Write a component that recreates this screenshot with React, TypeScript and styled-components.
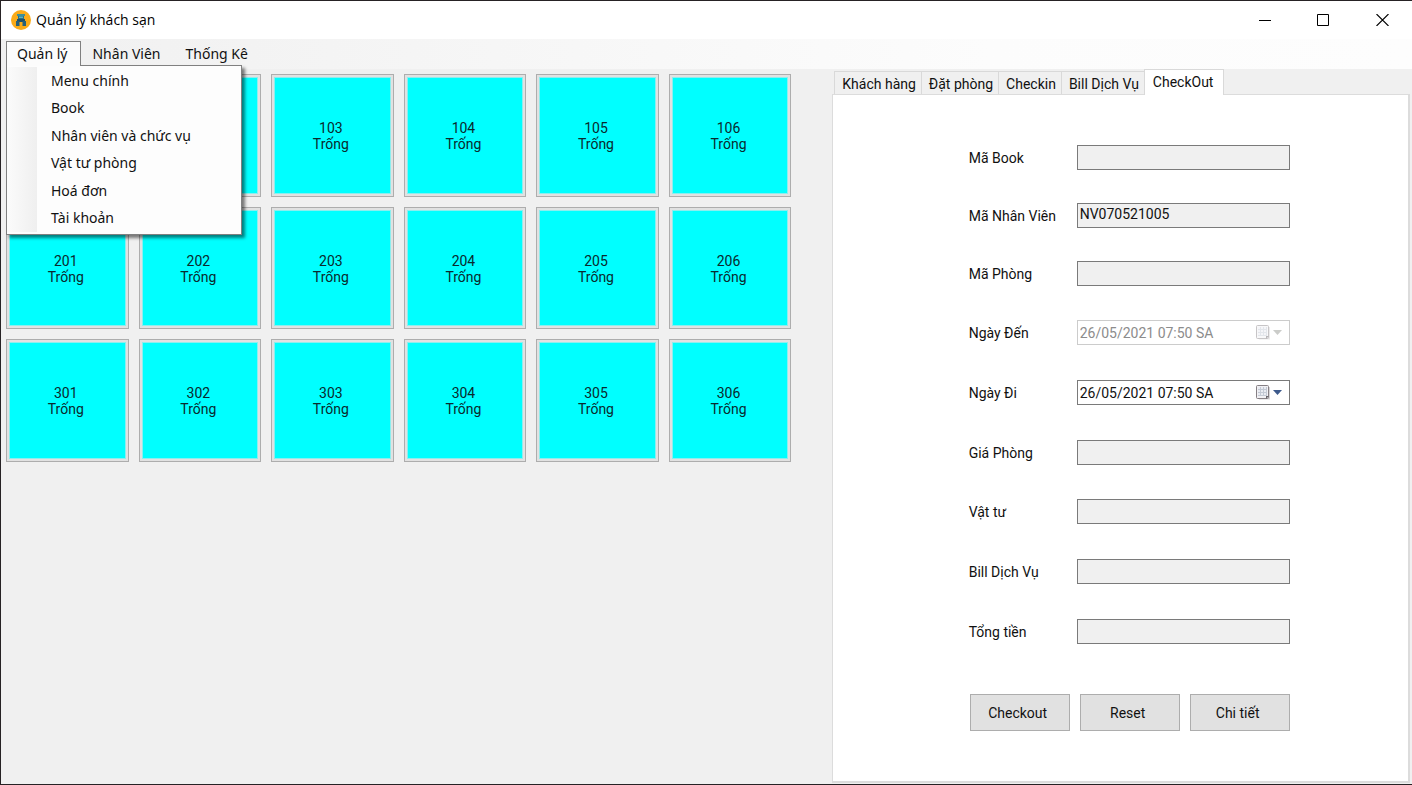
import React from "react";
import styled, { createGlobalStyle } from "styled-components";

const GlobalStyle = createGlobalStyle`
  *, *::before, *::after { box-sizing: border-box; }
  html, body { margin: 0; padding: 0; }
  body {
    background: #f0f0f0;
    color: #111;
    font-family: Roboto, "Liberation Sans", sans-serif;
    font-size: 14px;
    line-height: 16px;
  }
  button, input { font: inherit; color: inherit; margin: 0; }
`;

const Window = styled.div`
  display: flex;
  flex-direction: column;
  min-height: 100vh;
  border: solid #262224;
  border-width: 1px 0 1px 1px;
  background: #f0f0f0;
`;

const TitleBar = styled.header`
  display: flex;
  align-items: center;
  height: 38px;
  padding-left: 10px;
  background: #fff;
`;

const Title = styled.h1`
  flex: 1;
  margin: 0 0 0 5px;
  font: 400 14px/18px "Open Sans", "Noto Sans", sans-serif;
  color: #000;
`;

const WindowButton = styled.button`
  display: grid;
  place-items: center;
  width: 59px;
  height: 38px;
  padding: 0;
  border: 0;
  background: transparent;
`;

const MenuBar = styled.nav`
  display: flex;
  align-items: flex-start;
  height: 30px;
  padding: 2px 0 0 5px;
  background: linear-gradient(90deg, #f0f0f0, #fcfcfc 70%, #fdfdfd);
  font: 400 14px/20px "Noto Sans", "Open Sans", sans-serif;
`;

const MenuHolder = styled.div`
  position: relative;
`;

const MenuButton = styled.button<{ $open?: boolean }>`
  position: relative;
  z-index: 3;
  display: block;
  height: 25px;
  padding: 0 13px 1px 10px;
  border: solid ${(p) => (p.$open ? "#808080" : "transparent")};
  border-width: 1px 1px 0;
  background: ${(p) => (p.$open ? "#fcfcfc" : "transparent")};
`;

const DropDown = styled.div`
  position: absolute;
  top: 24px;
  left: 0;
  z-index: 2;
  display: flex;
  flex-direction: column;
  width: 236px;
  height: 170px;
  padding: 1px 1px 2px 0;
  border: 1px solid #808080;
  background: linear-gradient(90deg, #fbfbfb, #efefef) 0 1px / 30px 165px no-repeat, #fdfdfd;
  box-shadow: 3px 3px 3px rgba(0, 0, 0, 0.5);
`;

const MenuItem = styled.button`
  flex: 1;
  padding: 0 0 0 44px;
  border: 0;
  background: transparent;
  text-align: left;
  white-space: nowrap;
`;

const Workspace = styled.main`
  flex: 1;
  display: grid;
  grid-template-columns: minmax(0, 1fr) 41%;
  padding-right: 2px;
  padding-bottom: 1px;
`;

const Rooms = styled.section`
  display: grid;
  grid-template-columns: repeat(6, minmax(0, 1fr));
  align-content: start;
  gap: 10px;
  padding: 5px 41px 0 5px;
`;

const Room = styled.button`
  aspect-ratio: 1;
  padding: 2px 3px 0 0;
  border: 1px solid #adadad;
  background: #00ffff;
  box-shadow: inset 0 0 0 2px #e1e1e1, inset 0 0 0 3px #8ceeee;
  color: #0a2a2e;
  line-height: 16px;
`;

const Line = styled.span`
  display: block;
`;

const SidePanel = styled.section`
  display: flex;
  flex-direction: column;
`;

const Tabs = styled.div`
  display: flex;
  align-items: flex-end;
  padding-left: 2px;
`;

const Tab = styled.button<{ $selected?: boolean }>`
  position: relative;
  height: ${(p) => (p.$selected ? 26 : 23)}px;
  margin: 0 0 ${(p) => (p.$selected ? -1 : 0)}px -1px;
  padding: ${(p) => (p.$selected ? "0 10px 2px 8px" : "1px 5px 0 7px")};
  border: solid #d9d9d9;
  border-width: 1px 1px 0;
  background: ${(p) => (p.$selected ? "#fff" : "#f0f0f0")};
  white-space: nowrap;

  &:first-child { margin-left: 0; }
`;

const TabPage = styled.div`
  flex: 1;
  display: flex;
  justify-content: center;
  padding: 50px 0 40px 17px;
  border: 1px solid #dcdcdc;
  border-width: 1px 2px 2px 1px;
  background: #fff;
`;

const Form = styled.form`
  display: flex;
  flex-direction: column;
  gap: 34px;
`;

const Group = styled.div<{ $gap: number }>`
  display: flex;
  flex-direction: column;
  gap: ${(p) => p.$gap}px;
`;

const FieldRow = styled.div`
  display: grid;
  grid-template-columns: 108px 213px;
  align-items: center;
`;

const Label = styled.label`
  padding-top: 1px;
`;

const TextBox = styled.input`
  width: 100%;
  height: 25px;
  padding: 0 2px 4px;
  border: 1px solid #7a7a7a;
  border-radius: 0;
  background: #f0f0f0;
  outline: none;
`;

const DateBox = styled.div<{ $off?: boolean }>`
  display: flex;
  align-items: center;
  height: 25px;
  padding-right: 7px;
  border: 1px solid ${(p) => (p.$off ? "#cccccc" : "#7a7a7a")};
  background: #fff;
  color: ${(p) => (p.$off ? "#8c8c8c" : "#111")};
`;

const DateInput = styled.input`
  flex: 1;
  min-width: 0;
  padding: 0 2px;
  border: 0;
  background: transparent;
  outline: none;
`;

const PickButton = styled.button`
  display: flex;
  padding: 0;
  border: 0;
  background: transparent;
`;

const Actions = styled.div`
  display: flex;
  justify-content: space-between;
  padding: 16px 0 0 1px;
`;

const ActionButton = styled.button`
  width: 100px;
  height: 37px;
  padding: 0 4px 0 0;
  border: 1px solid #adadad;
  background: #e1e1e1;
`;

const CalendarIcon = ({ off }: { off?: boolean }) => (
  <svg width="27" height="17" viewBox="0 0 27 17" opacity={off ? 0.45 : 1} aria-hidden="true">
    <path d="M3 3h12v12.500H4z" fill="#d6d4d6" />
    <rect x="1.500" y="1.500" width="12" height="13" rx="1" fill="#f1f0f3" stroke="#857f84" />
    <path d="M3 3h9v9H3z" fill="#c3c9d4" />
    <path d="M3 3h2v2H3zM6 3h2v2H6zM9 3h2v2H9zM3 6h2v2H3zM6 6h2v2H6zM9 6h2v2H9zM3 9h2v2H3zM6 9h2v2H6zM9 9h2v2H9z" fill="#e9ebf1" />
    <path d="M11 15v-3h3z" fill="#6a666c" />
    <path d="M18 6h9l-4.500 5z" fill={off ? "#8d8f8a" : "#3d5a8c"} />
  </svg>
);

const AppIcon = () => (
  <svg width="20" height="20" viewBox="0 0 20 20" aria-hidden="true">
    <circle cx="10" cy="10" r="10" fill="#fbab18" />
    <path d="M6 4h8v2H6z" fill="#3f8f98" />
    <path d="M7 6h6v3H7z" fill="#2b6f86" />
    <path d="M6 9h8v3H6z" fill="#1f5068" />
    <path d="M5 11h3.500v5H5zM11.500 11H15v5h-3.500z" fill="#28617a" />
    <path d="M8 6.500h4v1.500H8z" fill="#5fb4b8" />
  </svg>
);

const roomNumbers = [1, 2, 3].flatMap((floor) =>
  [1, 2, 3, 4, 5, 6].map((n) => `${floor}0${n}`)
);

const menuItems = ["Menu chính", "Book", "Nhân viên và chức vụ", "Vật tư phòng", "Hoá đơn", "Tài khoản"];
const tabs = ["Khách hàng", "Đặt phòng", "Checkin", "Bill Dịch Vụ", "CheckOut"];

type FieldProps = { id: string; label: string; value?: string };

const TextField = ({ id, label, value = "" }: FieldProps) => (
  <FieldRow>
    <Label htmlFor={id}>{label}</Label>
    <TextBox id={id} defaultValue={value} readOnly />
  </FieldRow>
);

const DateField = ({ id, label, value, off }: FieldProps & { off?: boolean }) => (
  <FieldRow>
    <Label htmlFor={id}>{label}</Label>
    <DateBox $off={off}>
      <DateInput id={id} defaultValue={value} disabled={off} />
      <PickButton type="button" disabled={off} aria-label={`Chọn ${label}`}>
        <CalendarIcon off={off} />
      </PickButton>
    </DateBox>
  </FieldRow>
);

export default function App() {
  return (
    <>
      <GlobalStyle />
      <Window>
        <TitleBar>
          <AppIcon />
          <Title>Quản lý khách sạn</Title>
          <WindowButton type="button" aria-label="Thu nhỏ">
            <svg width="13" height="12"><path d="M1 6.500h12" stroke="#000" /></svg>
          </WindowButton>
          <WindowButton type="button" aria-label="Phóng to">
            <svg width="13" height="12"><path d="M.5.5h11v11H.5z" fill="none" stroke="#000" /></svg>
          </WindowButton>
          <WindowButton type="button" aria-label="Đóng">
            <svg width="13" height="12"><path d="M.5 0l12 12M12.500 0L.5 12" stroke="#000" strokeWidth="1.100" /></svg>
          </WindowButton>
        </TitleBar>

        <MenuBar>
          <MenuHolder>
            <MenuButton type="button" $open aria-expanded="true">Quản lý</MenuButton>
            <DropDown>
              {menuItems.map((item) => (
                <MenuItem key={item} type="button">{item}</MenuItem>
              ))}
            </DropDown>
          </MenuHolder>
          <MenuButton type="button">Nhân Viên</MenuButton>
          <MenuButton type="button">Thống Kê</MenuButton>
        </MenuBar>

        <Workspace>
          <Rooms>
            {roomNumbers.map((room) => (
              <Room key={room} type="button">
                <Line>{room}</Line>
                <Line>Trống</Line>
              </Room>
            ))}
          </Rooms>

          <SidePanel>
            <Tabs role="tablist">
              {tabs.map((tab) => (
                <Tab key={tab} type="button" role="tab" $selected={tab === "CheckOut"} aria-selected={tab === "CheckOut"}>
                  {tab}
                </Tab>
              ))}
            </Tabs>
            <TabPage role="tabpanel">
              <Form>
                <Group $gap={33}>
                  <TextField id="book" label="Mã Book" />
                  <TextField id="staff" label="Mã Nhân Viên" value="NV070521005" />
                  <TextField id="room" label="Mã Phòng" />
                </Group>
                <Group $gap={35}>
                  <DateField id="arrive" label="Ngày Đến" value="26/05/2021 07:50 SA" off />
                  <DateField id="leave" label="Ngày Đi" value="26/05/2021 07:50 SA" />
                  <TextField id="price" label="Giá Phòng" />
                </Group>
                <Group $gap={35}>
                  <TextField id="supplies" label="Vật tư" />
                  <TextField id="service" label="Bill Dịch Vụ" />
                  <TextField id="total" label="Tổng tiền" />
                </Group>
                <Actions>
                  <ActionButton type="button">Checkout</ActionButton>
                  <ActionButton type="reset">Reset</ActionButton>
                  <ActionButton type="button">Chi tiết</ActionButton>
                </Actions>
              </Form>
            </TabPage>
          </SidePanel>
        </Workspace>
      </Window>
    </>
  );
}
